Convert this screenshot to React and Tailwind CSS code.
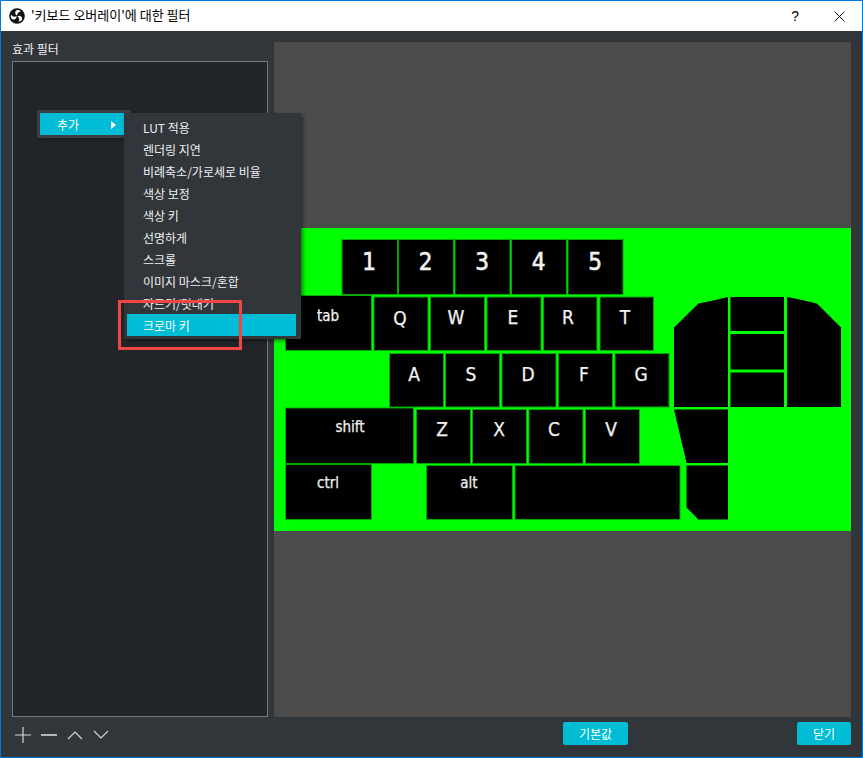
const FONT = "font-['Tahoma','Noto_Sans_CJK_KR','Noto_Sans',sans-serif]";

const filters = [
  "LUT 적용",
  "렌더링 지연",
  "비례축소/가로세로 비율",
  "색상 보정",
  "색상 키",
  "선명하게",
  "스크롤",
  "이미지 마스크/혼합",
  "자르기/덧대기",
];

// x, y, right, bottom as read off the overlay image
const keys = [
  [342, 239.5, 397.5, 294.5, "1", 24, 369, 270],
  [398.5, 239.5, 453.5, 294.5, "2", 24, 425.5, 270],
  [455, 239.5, 510, 294.5, "3", 24, 482, 270],
  [511.5, 239.5, 566.5, 294.5, "4", 24, 538.5, 270],
  [568, 239.5, 623, 294.5, "5", 24, 595, 270],
  [285.5, 295.5, 371.5, 350.5, "tab", 15, 328, 321],
  [374, 297, 428, 350.5, "Q", 19, 400, 325],
  [430.5, 297, 484.5, 350.5, "W", 19, 456, 324],
  [487, 297, 541, 350.5, "E", 19, 513, 324],
  [543.5, 297, 597, 350.5, "R", 19, 568, 324],
  [600, 297, 653.5, 350.5, "T", 19, 625, 324],
  [389.5, 353.5, 443.5, 407, "A", 19, 414, 381],
  [445.5, 353.5, 499.5, 407, "S", 19, 471, 381],
  [502, 353.5, 556, 407, "D", 19, 528, 381],
  [558.5, 353.5, 612.5, 407, "F", 19, 584, 381],
  [615, 353.5, 669, 407, "G", 19, 641, 381],
  [285.5, 408, 413.5, 463.5, "shift", 15, 350, 432],
  [416.5, 409.5, 470.5, 463.5, "Z", 19, 442, 436],
  [472.5, 409.5, 526.5, 463.5, "X", 19, 499, 436],
  [529, 409.5, 583, 463.5, "C", 19, 554, 436],
  [585.5, 409.5, 639.5, 463.5, "V", 19, 611, 436],
  [285.5, 464.5, 371.5, 519.5, "ctrl", 15, 328, 488],
  [426.5, 465.5, 512.5, 519.5, "alt", 15, 469, 488],
  [515, 465.5, 680, 519.5, "", 15, 0, 0],
];

const mouseKeys = [
  "674,327.5 698.5,303.5 713,300.5 728,297 728,407 674,407",
  "730.5,297 784,297 784,331 730.5,331",
  "730.5,334 784,334 784,369.5 730.5,369.5",
  "730.5,372.5 784,372.5 784,407 730.5,407",
  "787,297 802,300 817,303.5 841,327.5 841,407 787,407",
  "674,409.5 728,409.5 728,463 686.5,463",
  "686.5,465.5 728,465.5 728,519.5 698.5,519.5 686.5,507.5",
];

function ObsLogo() {
  const blade = "M8 7.6C5.9 6.6 5.5 3.6 7.6 2.3C9.3 1.4 11.4 2.2 12 4.1C10.6 3.3 8.6 4.3 8 7.6Z";
  return (
    <svg width="16" height="16" viewBox="0 0 16 16" className="shrink-0">
      <circle cx="8" cy="8" r="7.8" fill="#111" />
      <path d={blade} fill="#fff" />
      <path d={blade} fill="#fff" transform="rotate(120 8 8)" />
      <path d={blade} fill="#fff" transform="rotate(240 8 8)" />
    </svg>
  );
}

function KeyboardImage() {
  // image sits at x 274, y 228 of the page; viewBox keeps the page numbers
  return (
    <svg viewBox="274 228 577 303" className="w-full h-[303px] block bg-[#00ff00]">
      {keys.map(([x, y, r, b, label, size, tx, ty]) => (
        <g key={`${x}-${y}`}>
          <rect x={x} y={y} width={r - x} height={b - y} fill="#000" stroke="#00a800" strokeWidth="1" />
          {label && (
            <text
              x={tx}
              y={ty}
              fontSize={size}
              textAnchor="middle"
              fill="#f2f2f2"
              stroke="#f2f2f2"
              strokeWidth={size === 24 ? 0.6 : 0.25}
              fontFamily="'DejaVu Sans Condensed','DejaVu Sans',sans-serif"
            >
              {label}
            </text>
          )}
        </g>
      ))}
      {mouseKeys.map((points) => (
        <polygon key={points} points={points} fill="#000" />
      ))}
    </svg>
  );
}

export default function App() {
  return (
    <div className={`relative w-[863px] h-[758px] flex flex-col overflow-hidden border border-[#0078d7] bg-[#31363b] ${FONT}`}>
      <div className="h-[30px] shrink-0 bg-white flex items-center pl-[8px] pr-[15px] text-[13px] text-black">
        <ObsLogo />
        <span className="ml-[6px] mb-[2px]">'키보드 오버레이'에 대한 필터</span>
        <div className="ml-auto flex items-center gap-[35px]">
          <span className="text-[14px] font-['Liberation_Sans',sans-serif]">?</span>
          <svg width="11" height="11" viewBox="0 0 11 11" stroke="#111" strokeWidth="1" className="mr-[2px]">
            <path d="M0.5 0.5 L10.5 10.5 M10.5 0.5 L0.5 10.5" />
          </svg>
        </div>
      </div>

      <div className="flex-1 min-h-0 flex gap-[6px] pl-[11px] pr-[11px] pt-[11px]">
        <div className="w-[256px] flex flex-col">
          <div className="h-[19px] text-[12px] leading-[13px] text-[#eff0f1]">효과 필터</div>
          <div className="flex-1 border border-[#76797c] bg-[#232629]" />
        </div>
        <div className="flex-1 bg-[#4c4c4c] flex items-center">
          <div className="w-full mt-[-1px]">
            <KeyboardImage />
          </div>
        </div>
      </div>

      <div className="h-[40px] shrink-0 flex pl-[14px] pr-[11px] pt-[5px]">
        <div className="flex items-start pt-[5px] gap-[10px] text-[#d8d9da]">
          <svg width="16" height="16" viewBox="0 0 16 16" stroke="currentColor" fill="none" strokeWidth="1.2">
            <path d="M0 8H16M8 0V16" />
          </svg>
          <svg width="16" height="16" viewBox="0 0 16 16" stroke="currentColor" fill="none" strokeWidth="1.6">
            <path d="M0 8H16" />
          </svg>
          <svg width="16" height="16" viewBox="0 0 16 16" stroke="currentColor" fill="none" strokeWidth="1.1">
            <path d="M1 12L8 5L15 12" />
          </svg>
          <svg width="16" height="16" viewBox="0 0 16 16" stroke="currentColor" fill="none" strokeWidth="1.1">
            <path d="M1 4L8 11L15 4" />
          </svg>
        </div>
        <button className="ml-[454px] w-[65px] h-[23px] pt-[1px] rounded-[2px] bg-[#00bcd4] text-[12px] text-white">기본값</button>
        <button className="ml-auto w-[54px] h-[23px] pt-[1px] rounded-[2px] bg-[#00bcd4] text-[12px] text-white">닫기</button>
      </div>

      {/* context menu on top of the list */}
      <div className="absolute left-[36px] top-[109px] w-[94px] h-[28px] p-[3px] bg-[#3a3f44] shadow-[2px_2px_4px_rgba(0,0,0,0.35)]">
        <div className="w-[84px] h-[22px] bg-[#00bcd4] flex items-center pl-[17px] pt-[1px] text-[12px] text-white">
          추가
          <span className="ml-auto mr-[8px] w-0 h-0 border-y-[4px] border-y-transparent border-l-[5px] border-l-white" />
        </div>
      </div>

      <div className="absolute left-[123px] top-[112px] w-[177px] h-[226px] pl-[3px] pr-[5px] py-[3px] bg-[#31363b] shadow-[2px_2px_4px_rgba(0,0,0,0.45)] text-[12px] text-[#eff0f1]">
        {filters.map((name) => (
          <div key={name} className="h-[22px] flex items-center pl-[16px] pt-[1px]">{name}</div>
        ))}
        <div className="h-[22px] flex items-center pl-[16px] pt-[1px] bg-[#00bcd4] text-white">크로마 키</div>
      </div>

      {/* red marker drawn over the screenshot */}
      <div className="absolute left-[117px] top-[299px] w-[124px] h-[50px] border-[3px] border-[#f24545]" />
    </div>
  );
}
